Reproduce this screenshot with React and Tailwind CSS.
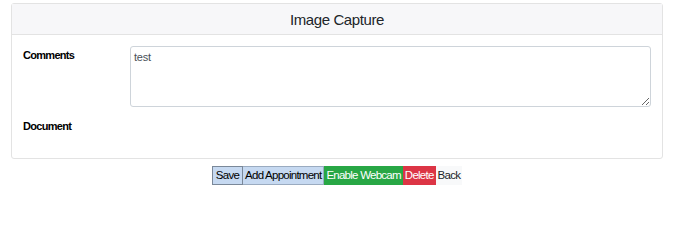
import React from "react";

const App = () => {
  return (
    <div className="w-[690px] h-[202px] bg-white font-['Liberation_Sans',Arial,sans-serif] text-black">
      <div className="pl-[11px] pr-[27px] pt-[3px]">
        {/* card */}
        <div className="border border-[#e3e3e3] rounded-[3px]">
          <div className="h-[31px] pt-[1px] bg-[#f7f7f9] border-b border-[#e3e3e3] flex items-center justify-center">
            <h3 className="text-[15px] leading-none tracking-[-0.4px] text-[#212529]">Image Capture</h3>
          </div>
          <div className="px-[11px] pt-[11px] pb-[12px]">
            <div className="flex">
              <label className="w-[107px] pt-[1px] text-[11px] font-bold tracking-[-0.7px]">Comments</label>
              <textarea
                className="flex-1 h-[61px] border border-[#ced4da] rounded-[3px] px-[3px] py-[2px] text-[11px] tracking-[-0.2px] text-[#495057] outline-none"
                defaultValue="test"
              />
            </div>
            <div className="flex mt-[11px] h-[28px]">
              <label className="w-[107px] text-[11px] font-bold tracking-[-0.7px]">Document</label>
            </div>
          </div>
        </div>
      </div>
      {/* buttons */}
      <div className="flex justify-center mt-[7px] pr-[16px]">
        <button className="h-[19px] px-[3px] text-[11.5px] tracking-[-0.75px] bg-[#c6d9f1] border border-[#7a8899]">Save</button>
        <button className="h-[19px] px-[2px] text-[11.5px] tracking-[-0.75px] bg-[#c6d9f1] border-y border-r border-[#9aabc0]">Add Appointment</button>
        <button className="h-[19px] px-[2px] text-[11.5px] tracking-[-0.75px] bg-[#28a745] text-white">Enable Webcam</button>
        <button className="h-[19px] px-[2px] text-[11.5px] tracking-[-0.75px] bg-[#dc3545] text-white">Delete</button>
        <button className="h-[19px] px-[2px] text-[11.5px] tracking-[-0.75px] bg-[#f8f9fa] text-[#212529]">Back</button>
      </div>
    </div>
  );
};

export default App;
